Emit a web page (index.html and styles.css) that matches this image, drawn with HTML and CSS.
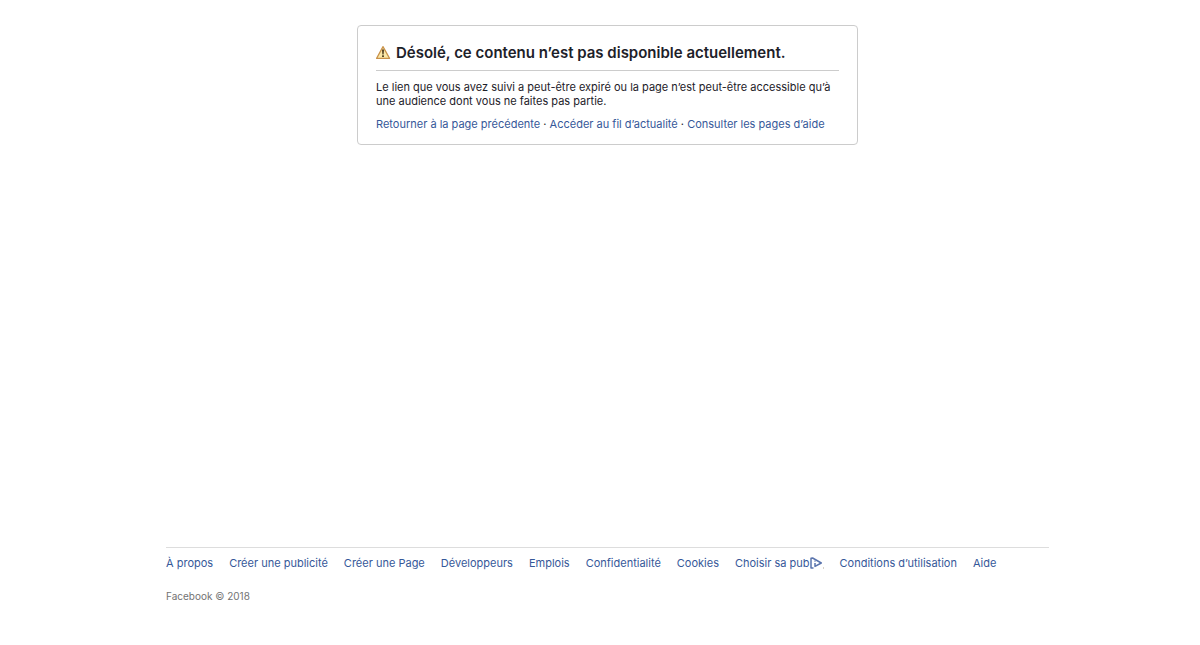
FILE: index.html
```html
<!DOCTYPE html>
<html lang="fr">
  <head>
    <meta charset="UTF-8" />
    <meta name="viewport" content="width=device-width, initial-scale=1.0" />
    <title>Contenu non disponible</title>
    <link rel="stylesheet" href="styles.css">
  </head>
  <body>
    <main class="error-box">
      <div class="error-header">
        <svg class="warning-icon" viewBox="0 0 15 16" aria-hidden="true">
          <path d="M7 1.6 13.6 13.4H.6Z" fill="#fbe8a8" stroke="#c9924a" stroke-width="1.2" stroke-linejoin="round" />
          <path d="M6 4.5h2l-.4 5H6.4z" fill="#4a3a1c" />
          <rect x="6.1" y="10.3" width="1.8" height="1.7" fill="#4a3a1c" />
        </svg>
        <h1>Désolé, ce contenu n’est pas disponible actuellement.</h1>
      </div>
      <p class="error-text">
        Le lien que vous avez suivi a peut-être expiré ou la page n’est peut-être accessible qu’à une audience dont vous ne faites pas partie.
      </p>
      <p class="error-links">
        <a href="#">Retourner à la page précédente</a> ·
        <a href="#">Accéder au fil d’actualité</a> ·
        <a href="#">Consulter les pages d’aide</a>
      </p>
    </main>

    <footer class="footer">
      <ul class="footer-links">
        <li><a href="#">À propos</a></li>
        <li><a href="#">Créer une publicité</a></li>
        <li><a href="#">Créer une Page</a></li>
        <li><a href="#">Développeurs</a></li>
        <li><a href="#">Emplois</a></li>
        <li><a href="#">Confidentialité</a></li>
        <li><a href="#">Cookies</a></li>
        <li>
          <a href="#" class="ad-choices">Choisir sa pub<svg class="ad-icon" viewBox="0 0 14 12" aria-hidden="true">
              <path d="M3.5 11H1V1.2L2.6 1 11.3 6 5 9.4V6" fill="none" stroke="#5a74ad" stroke-width="1.5" stroke-linejoin="round" />
              <path d="M5 3.6v1.2" stroke="#5a74ad" stroke-width="1.2" />
              <path d="M13.5 10v2" stroke="#d8d3c8" />
            </svg></a>
        </li>
        <li><a href="#">Conditions d’utilisation</a></li>
        <li><a href="#">Aide</a></li>
      </ul>
      <div class="copyright">Facebook © 2018</div>
    </footer>
  </body>
</html>
```
FILE: styles.css
```css
* {
  box-sizing: border-box;
}

body {
  margin: 0;
  padding: 25px 0 42px 15px;
  display: flex;
  flex-direction: column;
  min-height: 100vh;
  background-color: #fff;
  color: #1d2129;
  font-family: Inter, "Liberation Sans", sans-serif;
  font-size: 11px;
  line-height: 14px;
}

a {
  color: #365899;
  text-decoration: none;
}

a:hover {
  text-decoration: underline;
}

/* Error box */
.error-box {
  width: 100%;
  max-width: 501px;
  margin: 0 auto;
  padding: 17px 18px 13px;
  border: 1px solid #ccc;
  border-radius: 4px;
}

.error-header {
  display: flex;
  align-items: center;
  gap: 5px;
  padding-bottom: 7px;
  border-bottom: 1px solid #ccc;
}

.warning-icon {
  width: 15px;
  height: 16px;
  flex: none;
}

h1 {
  margin: 0;
  font-size: 15px;
  font-weight: 600;
  line-height: 20px;
}

.error-text {
  margin: 9px 0;
}

.error-links {
  margin: 0;
}

/* Footer */
.footer {
  width: 100%;
  max-width: 883px;
  margin: auto auto 0;
  border-top: 1px solid #ddd;
}

.footer-links {
  display: flex;
  flex-wrap: wrap;
  gap: 8px 16px;
  margin: 0;
  padding: 8px 0 0;
  list-style: none;
}

.ad-choices {
  display: flex;
  align-items: center;
}

.ad-icon {
  width: 14px;
  height: 12px;
}

.copyright {
  margin-top: 19px;
  color: #737373;
  font-size: 10px;
}
```
